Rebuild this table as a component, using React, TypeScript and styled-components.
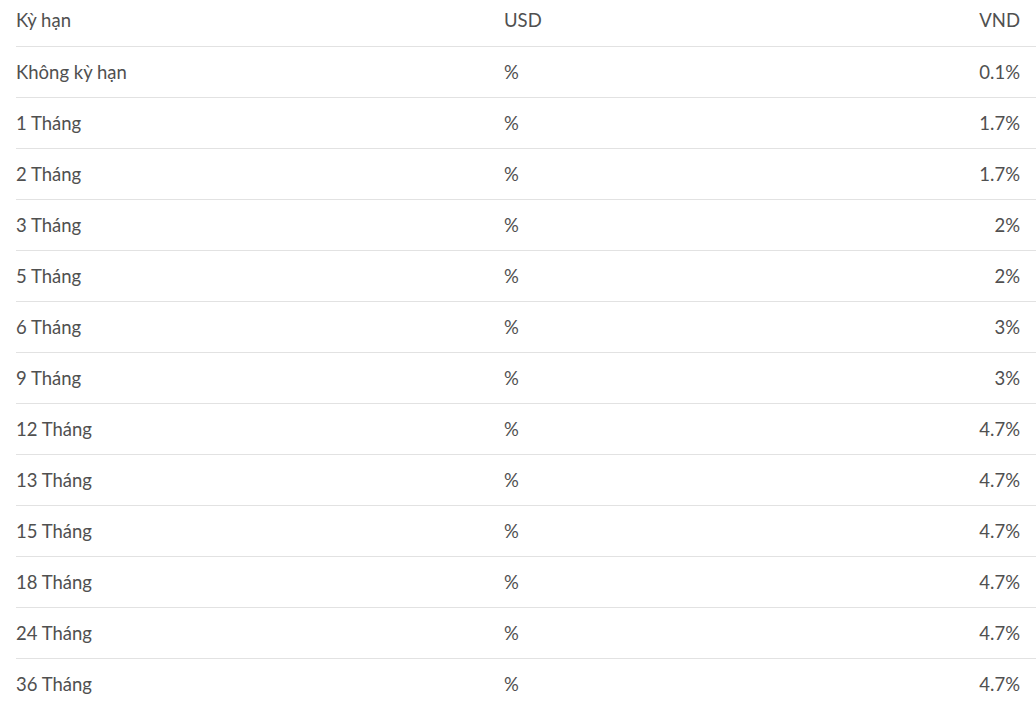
import React from "react";
import styled, { createGlobalStyle } from "styled-components";

const Global = createGlobalStyle`
  html, body { margin: 0; padding: 0; background: #fff; }
  body { font-family: "Lato", "Noto Sans", sans-serif; overflow: hidden; }
`;

const Table = styled.div`
  margin-left: 16px;
  width: 1020px;
  display: flex;
  flex-direction: column;
`;

const Row = styled.div<{ $head?: boolean }>`
  display: grid;
  grid-template-columns: 488px 1fr auto;
  align-items: center;
  box-sizing: border-box;
  height: ${(p) => (p.$head ? "47px" : "51px")};
  padding-bottom: ${(p) => (p.$head ? "6px" : "0")};
  border-bottom: 1px solid #e2e2e2;
  padding-right: 16px;
  font-size: 18.5px;
  color: #505050;
`;

const Cell = styled.div<{ $right?: boolean }>`
  text-align: ${(p) => (p.$right ? "right" : "left")};
  white-space: nowrap;
`;

const rows: [string, string][] = [
  ["Không kỳ hạn", "0.1%"],
  ["1 Tháng", "1.7%"],
  ["2 Tháng", "1.7%"],
  ["3 Tháng", "2%"],
  ["5 Tháng", "2%"],
  ["6 Tháng", "3%"],
  ["9 Tháng", "3%"],
  ["12 Tháng", "4.7%"],
  ["13 Tháng", "4.7%"],
  ["15 Tháng", "4.7%"],
  ["18 Tháng", "4.7%"],
  ["24 Tháng", "4.7%"],
  ["36 Tháng", "4.7%"],
];

export default function App() {
  return (
    <>
      <Global />
      <Table>
        <Row $head>
          <Cell>Kỳ hạn</Cell>
          <Cell>USD</Cell>
          <Cell $right>VND</Cell>
        </Row>
        {rows.map(([term, vnd]) => (
          <Row key={term}>
            <Cell>{term}</Cell>
            <Cell>%</Cell>
            <Cell $right>{vnd}</Cell>
          </Row>
        ))}
      </Table>
    </>
  );
}
